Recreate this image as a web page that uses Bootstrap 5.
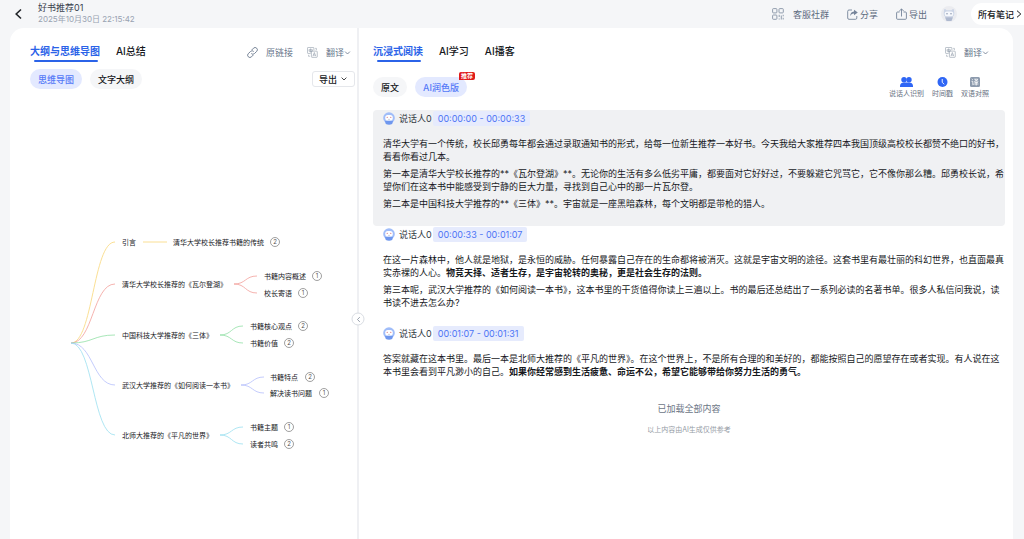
<!DOCTYPE html>
<html lang="zh-CN">
<head>
<meta charset="utf-8">
<meta name="viewport" content="width=device-width, initial-scale=1">
<title>好书推荐01</title>
<link href="https://cdn.jsdelivr.net/npm/bootstrap@5.3.0/dist/css/bootstrap.min.css" rel="stylesheet">
<style>
  body { background: #f5f6f8; color: #16181c; font: 9px/13px Inter, "Noto Sans CJK SC", sans-serif; }
  button, a { font: inherit; color: inherit; text-decoration: none; }
  button { border: 0; background: none; padding: 0; white-space: nowrap; }
  svg { flex: none; display: block; }
  .topbar { height: 28px; padding-left: 14px; color: #5d6b7e; }
  .top-actions { gap: 18px; }
  .top-actions button { gap: 2px; }
  .top-actions .community { gap: 9px; }
  .top-actions .avatar { margin: 0 -4px; }
  .doc-title { font-size: 9px; color: #3a424e; font-weight: 400; margin: 0; }
  .doc-time { color: #98a2b1; font-size: 8px; }
  .all-notes { background: #fff; color: #16181c; border-radius: 11px 0 0 11px; height: 22px; padding: 0 2px 0 7px; gap: 2px; font-weight: 500; }
  .avatar { width: 16px; height: 16px; background: #ebecf0; }
  .workspace { margin: 0 11px 0 10px; background: #fff; border-radius: 14px 14px 0 0; }
  .outline-pane { flex: none; width: 34.6%; padding: 15px 0 0 20px; }
  .reading-pane { flex: 1 1 0; min-width: 0; padding: 15px 8px 16px 14px; }
  .splitter { flex: none; width: 2px; background: #eff0f3; }
  .collapse-btn { top: 57%; left: 50%; width: 13px; height: 13px; background: #fff; border: 1px solid #d9dde3; }
  .tab-btn { font-size: 10px; line-height: 15px; padding: 1px 0 3px; font-weight: 500; }
  .tab-btn.current { color: #2b63e8; font-weight: 700; }
  .tab-btn.current::after { content: ""; position: absolute; left: 4px; right: 2px; bottom: 0; height: 2px; border-radius: 1px; background: #2b63e8; }
  .tool-btn { color: #66758a; }
  .outline-tools { gap: 14px; padding-right: 6px; }
  .outline-views { margin-top: 7px; padding-right: 2px; }
  .reading-views { margin: 15px 0 12px; }
  .pill-btn { height: 20px; border-radius: 10px; background: #f5f6f8; padding: 0 8px; font-weight: 500; }
  .pill-btn.current { background: #e3e9ff; color: #5579f7; }
  .export-btn { height: 16px; border: 1px solid #e5e7eb; border-radius: 3px; padding: 0 7px 0 6px; font-weight: 500; }
  .hot-tag { top: -5px; right: -8px; background: #e01a1a; color: #fff; font-size: 6px; line-height: 8px; padding: 0 2px; border-radius: 2px 2px 2px 0; font-weight: 700; }
  .switch-btn { font-size: 7px; line-height: 9px; color: #66707f; gap: 2px; }
  .segment { padding: 1px 0 16px 10px; border-radius: 4px; }
  .segment.playing { background: #f0f1f3; }
  .segment p { margin: 0 0 4px; }
  .segment p:last-child { margin: 0; }
  .speaker { height: 15px; margin-bottom: 11px; color: #333a45; }
  .time-chip { background: #e6ebfd; color: #4d74f5; border-radius: 2px; padding: 0 5px; line-height: 15px; margin-left: 1px; }
  .end-note { color: #6c7686; }
  .ai-note { color: #969ca6; font-size: 7px; }
  .mindmap { margin: 136px 0 0 30px; }
  .mindmap text { font-size: 7px; fill: #16181c; }
  .mindmap .count text { font-size: 6px; fill: #555; text-anchor: middle; }
  .mindmap .count circle { fill: #fff; stroke: #777; stroke-width: .7; }
  .mindmap path { fill: none; stroke-width: .8; }
</style>
</head>
<body class="d-flex flex-column min-vh-100">
<svg class="d-none" aria-hidden="true">
  <symbol id="i-down" viewBox="0 0 6 4"><path d="M.6.6 3 3 5.4.6" fill="none" stroke="currentColor" stroke-width=".8"/></symbol>
  <symbol id="i-translate" viewBox="0 0 12 12"><g fill="none" stroke="currentColor" stroke-width=".6" opacity=".8"><path d="M7.500 3.500V1.200Q7.500.5 6.800.5H1.200Q.5.500.5 1.200V6.300Q.5 7 1.200 7H4"/><path d="M2 3H6M4 1.500V6M2.300 3V4.700H5.700V3"/><rect x="4.800" y="4.500" width="6.400" height="6.800" rx=".8"/><path d="M6.500 10 8 6 9.500 10M7 8.800H9M9 1.500h1.200v1.800M1.800 8.500v1.700H3"/></g></symbol>
  <symbol id="i-speaker" viewBox="0 0 12 13"><circle cx="6" cy="6" r="5.800" fill="#a0bdf9"/><path d="M2 9 2.800 12Q6 13.500 9.200 12L10 9Z" fill="#6f97ee"/><rect x="2.200" y="3" width="7.600" height="5.600" rx="2.600" fill="#fff"/><circle cx="4.200" cy="5.300" r=".6" fill="#d76d75"/><circle cx="7.800" cy="5.300" r=".6" fill="#d76d75"/><path d="M5 7.200Q6 8 7 7.200" fill="none" stroke="#aab" stroke-width=".5"/></symbol>
</svg>

<header class="topbar d-flex align-items-center">
  <button type="button" aria-label="返回" class="me-3 text-dark"><svg width="8" height="12" viewBox="0 0 8 12"><path d="M7 1.500 2.200 6 7 10.500" fill="none" stroke="currentColor" stroke-width="1.600"/></svg></button>
  <div class="flex-grow-1">
    <h1 class="doc-title lh-sm">好书推荐01</h1>
    <div class="doc-time">2025年10月30日 22:15:42</div>
  </div>
  <nav class="top-actions d-flex align-items-center">
    <button type="button" class="community d-flex align-items-center"><svg width="12" height="12" viewBox="0 0 12 12" fill="none" stroke="#8793a5" stroke-width=".9"><rect x=".6" y=".6" width="4.300" height="4.300" rx=".8"/><rect x="7" y=".6" width="4.300" height="4.300" rx=".8"/><rect x=".6" y="7" width="4.300" height="4.300" rx=".8"/><path d="M7.200 6.800V9M9.300 7.500V11.500M11.200 6.800V8.300M7.200 10.500V11.500M11.200 9.800V11.500"/></svg>客服社群</button>
    <button type="button" class="d-flex align-items-center"><svg width="11" height="11" viewBox="0 0 11 11"><path d="M5 1H2Q.7 1 .7 2.300V9Q.7 10.300 2 10.300H8.500Q9.800 10.300 9.800 9V7" fill="none" stroke="#75849a" stroke-width=".9"/><path d="M7 .800 10.800 3.500 7 6.200V4.600Q4.500 4.600 3.200 7Q3.300 2.900 7 2.500Z" fill="#75849a"/></svg>分享</button>
    <button type="button" class="d-flex align-items-center"><svg width="11" height="12" viewBox="0 0 11 12" fill="none" stroke="#75849a" stroke-width=".9"><path d="M3.500 4H1.500Q.6 4 .6 5V10.300Q.6 11.300 1.600 11.300H9.400Q10.400 11.300 10.400 10.300V5Q10.400 4 9.500 4H7.500M5.500 8.500V1M3.200 3.200 5.500.9 7.800 3.200"/></svg>导出</button>
    <button type="button" aria-label="账户" class="avatar rounded-circle d-flex align-items-center justify-content-center"><svg width="14" height="15" viewBox="0 0 14 15"><path d="M2 3Q2.500 1 4.500 3.200H9.500Q11.500 1 12 3L12.300 7Q12 10.500 7 10.500T1.700 7Z" fill="#ccd5e6"/><rect x="2.600" y="4.500" width="8.800" height="4.800" rx="2.200" fill="#f6f8fc"/><circle cx="5" cy="6.700" r=".7" fill="#7d89a4"/><circle cx="9" cy="6.700" r=".7" fill="#7d89a4"/><path d="M3 10.200H11L9.500 14H4.500Z" fill="#aeb9cf"/></svg></button>
    <a href="#" class="all-notes d-flex align-items-center text-nowrap">所有笔记<svg width="6" height="8" viewBox="0 0 6 8"><path d="M1 .700 4.800 4 1 7.300" fill="none" stroke="currentColor"/></svg></a>
  </nav>
</header>

<main class="workspace d-flex flex-grow-1">
  <section class="outline-pane">
    <div class="d-flex">
      <button type="button" class="tab-btn current position-relative me-3">大纲与思维导图</button>
      <button type="button" class="tab-btn">AI总结</button>
      <div class="outline-tools d-flex align-items-center ms-auto">
        <button type="button" class="tool-btn d-flex align-items-center"><svg class="me-2" width="11" height="11" viewBox="0 0 11 11" fill="none" stroke="currentColor" stroke-width=".9"><path d="M4.700 3 6.500 1.200a2.200 2.200 0 0 1 3.200 3.200L7.500 6.500a2.200 2.200 0 0 1-3.200 0M6.300 8 4.500 9.800A2.200 2.200 0 0 1 1.300 6.600L3.500 4.500a2.200 2.200 0 0 1 3.200 0"/></svg>原链接</button>
        <button type="button" class="tool-btn d-flex align-items-center"><svg class="me-2" width="11" height="11"><use href="#i-translate"/></svg>翻译<svg width="7" height="4"><use href="#i-down"/></svg></button>
      </div>
    </div>
    <div class="outline-views d-flex align-items-center">
      <button type="button" class="pill-btn current me-2">思维导图</button>
      <button type="button" class="pill-btn">文字大纲</button>
      <button type="button" class="export-btn d-flex align-items-center gap-1 ms-auto">导出<svg width="6" height="4"><use href="#i-down"/></svg></button>
    </div>
    <svg class="mindmap" width="270" height="220" viewBox="60 225 270 220" overflow="visible" role="img" aria-label="思维导图">
      <g stroke="#f9d778"><path d="M71 343C93 343 93 242 115 242M143 242H167"/></g>
      <g stroke="#f3a09a"><path d="M71 343C93 343 93 284 115 284M234 284C246 284 245 276 257 276M234 284C246 284 245 293 257 293"/></g>
      <g stroke="#92dfa6"><path d="M71 343C93 343 93 335 115 335M220 335C232 335 231 326 243 326M220 335C232 335 231 343 243 343"/></g>
      <g stroke="#b5bffb"><path d="M71 343C93 343 93 385 115 385M241 385C253 385 252 377 264 377M241 385C253 385 252 393 264 393"/></g>
      <g stroke="#9bdff0"><path d="M71 343C93 343 93 435 115 435M220 435C232 435 231 427 243 427M220 435C232 435 231 444 243 444"/></g>
      <g>
        <text x="122" y="245">引言</text><text x="173" y="245">清华大学校长推荐书籍的传统</text>
        <text x="122" y="287">清华大学校长推荐的《瓦尔登湖》</text><text x="264" y="279">书籍内容概述</text><text x="264" y="296">校长寄语</text>
        <text x="122" y="338">中国科技大学推荐的《三体》</text><text x="250" y="329">书籍核心观点</text><text x="250" y="346">书籍价值</text>
        <text x="122" y="388">武汉大学推荐的《如何阅读一本书》</text><text x="270" y="380">书籍特点</text><text x="270" y="396">解决读书问题</text>
        <text x="122" y="438">北师大推荐的《平凡的世界》</text><text x="250" y="430">书籍主题</text><text x="250" y="447">读者共鸣</text>
      </g>
      <g class="count">
        <circle cx="275" cy="242" r="4.500"/><text x="275" y="244">2</text>
        <circle cx="317" cy="276" r="4.500"/><text x="317" y="278">1</text>
        <circle cx="303" cy="293" r="4.500"/><text x="303" y="295">1</text>
        <circle cx="303" cy="326" r="4.500"/><text x="303" y="328">2</text>
        <circle cx="289" cy="343" r="4.500"/><text x="289" y="345">2</text>
        <circle cx="310" cy="377" r="4.500"/><text x="310" y="379">2</text>
        <circle cx="324" cy="393" r="4.500"/><text x="324" y="395">1</text>
        <circle cx="289" cy="427" r="4.500"/><text x="289" y="429">1</text>
        <circle cx="289" cy="444" r="4.500"/><text x="289" y="446">2</text>
      </g>
    </svg>
  </section>

  <div class="splitter position-relative">
    <button type="button" aria-label="收起" class="collapse-btn position-absolute translate-middle rounded-circle d-flex align-items-center justify-content-center"><svg width="4" height="6" viewBox="0 0 4 6"><path d="M3.300.6 1 3 3.300 5.400" fill="none" stroke="#7c8696" stroke-width=".8"/></svg></button>
  </div>

  <section class="reading-pane">
    <div class="d-flex pe-3">
      <button type="button" class="tab-btn current position-relative me-3">沉浸式阅读</button>
      <button type="button" class="tab-btn me-3">AI学习</button>
      <button type="button" class="tab-btn">AI播客</button>
      <button type="button" class="tool-btn d-flex align-items-center ms-auto"><svg class="me-2" width="11" height="11"><use href="#i-translate"/></svg>翻译<svg width="7" height="4"><use href="#i-down"/></svg></button>
    </div>
    <div class="reading-views d-flex align-items-start">
      <button type="button" class="pill-btn me-2">原文</button>
      <button type="button" class="pill-btn current position-relative">AI润色版<span class="hot-tag position-absolute">推荐</span></button>
      <div class="d-flex ms-auto me-3 gap-2">
        <button type="button" class="switch-btn d-flex flex-column align-items-center"><svg width="13" height="10" viewBox="0 0 13 10" fill="#2f66f5"><circle cx="4" cy="2.700" r="2.700"/><circle cx="9" cy="2.700" r="2.700"/><path d="M0 10V8.500Q.5 5.500 4 5.500H9Q12.500 5.500 13 8.500V10Z"/></svg>说话人识别</button>
        <button type="button" class="switch-btn d-flex flex-column align-items-center"><svg width="11" height="10" viewBox="0 0 11 11"><circle cx="5.500" cy="5.500" r="5.500" fill="#2f66f5"/><path d="M5.200 2.200V5.800L7.300 8" fill="none" stroke="#fff"/></svg>时间戳</button>
        <button type="button" class="switch-btn d-flex flex-column align-items-center"><svg width="10" height="10" viewBox="0 0 10 10"><rect width="10" height="10" rx="1.500" fill="#8c9aad"/><path d="M1.800 2 2.800 2.800M1.500 4.300H2.800V7.800L3.800 7M4.200 2.200H7.800Q7 4 4.200 4.500M5 2.600Q6.200 4 8.300 4.400M4.500 5.600H8M4.200 7H8.400M6.200 4.600V8.500" fill="none" stroke="#fff" stroke-width=".8"/></svg>双语对照</button>
      </div>
    </div>

    <article class="segment playing">
      <div class="speaker d-flex align-items-center"><svg class="me-1" width="12" height="13"><use href="#i-speaker"/></svg>说话人0<span class="time-chip">00:00:00 - 00:00:33</span></div>
      <p>清华大学有一个传统，校长邱勇每年都会通过录取通知书的形式，给每一位新生推荐一本好书。今天我给大家推荐四本我国顶级高校校长都赞不绝口的好书，看看你看过几本。</p>
      <p>第一本是清华大学校长推荐的**《瓦尔登湖》**。无论你的生活有多么低劣平庸，都要面对它好好过，不要躲避它咒骂它，它不像你那么糟。邱勇校长说，希望你们在这本书中能感受到宁静的巨大力量，寻找到自己心中的那一片瓦尔登。</p>
      <p>第二本是中国科技大学推荐的**《三体》**。宇宙就是一座黑暗森林，每个文明都是带枪的猎人。</p>
    </article>
    <article class="segment">
      <div class="speaker d-flex align-items-center"><svg class="me-1" width="12" height="13"><use href="#i-speaker"/></svg>说话人0<span class="time-chip">00:00:33 - 00:01:07</span></div>
      <p>在这一片森林中，他人就是地狱，是永恒的威胁。任何暴露自己存在的生命都将被消灭。这就是宇宙文明的途径。这套书里有最壮丽的科幻世界，也直面最真实赤裸的人心。<strong>物竞天择、适者生存，是宇宙轮转的奥秘，更是社会生存的法则。</strong></p>
      <p>第三本呢，武汉大学推荐的《如何阅读一本书》，这本书里的干货值得你读上三遍以上。书的最后还总结出了一系列必读的名著书单。很多人私信问我说，读书读不进去怎么办?</p>
    </article>
    <article class="segment">
      <div class="speaker d-flex align-items-center"><svg class="me-1" width="12" height="13"><use href="#i-speaker"/></svg>说话人0<span class="time-chip">00:01:07 - 00:01:31</span></div>
      <p>答案就藏在这本书里。最后一本是北师大推荐的《平凡的世界》。在这个世界上，不是所有合理的和美好的，都能按照自己的愿望存在或者实现。有人说在这本书里会看到平凡渺小的自己。<strong>如果你经常感到生活疲惫、命运不公，希望它能够带给你努力生活的勇气。</strong></p>
    </article>
    <div class="text-center mt-2">
      <div class="end-note mb-2">已加载全部内容</div>
      <div class="ai-note">以上内容由AI生成仅供参考</div>
    </div>
  </section>
</main>
<script src="https://cdn.jsdelivr.net/npm/bootstrap@5.3.0/dist/js/bootstrap.bundle.min.js"></script>
</body>
</html>
